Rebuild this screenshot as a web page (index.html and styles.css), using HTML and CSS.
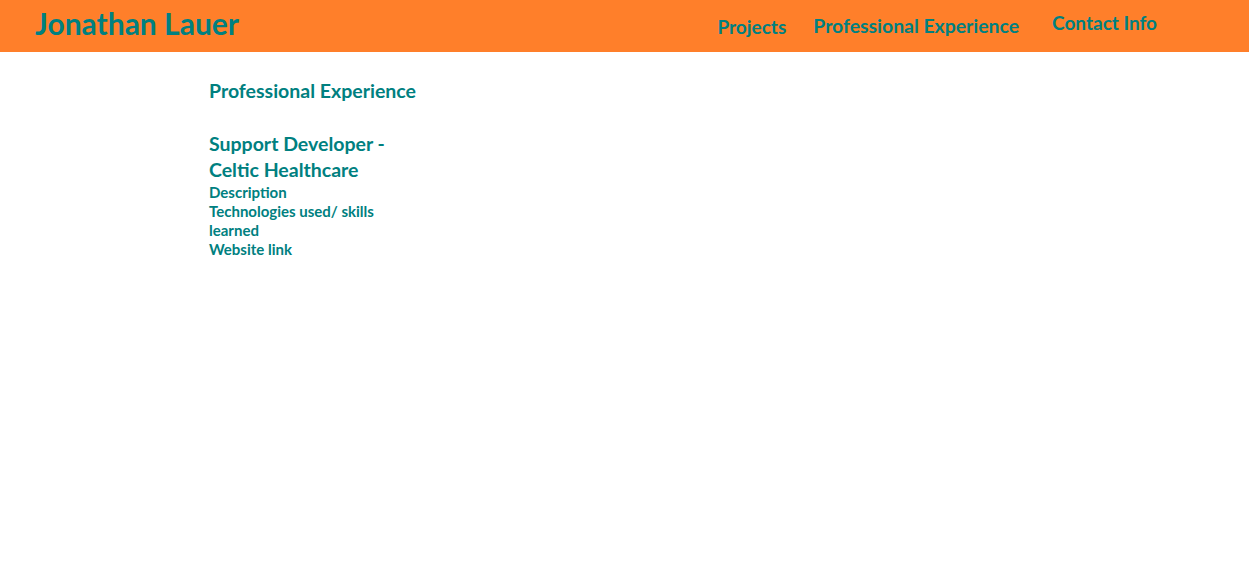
FILE: index.html
```html
<!DOCTYPE html>
<html>
<head>
<meta charset="utf-8">
<link rel="stylesheet" href="styles.css">
</head>
<body>
<header class="topbar">
  <h1 class="brand">Jonathan Lauer</h1>
  <nav class="nav">
    <a class="nav-link nav-low" href="#">Projects</a>
    <a class="nav-link nav-mid" href="#">Professional Experience</a>
    <a class="nav-link nav-high" href="#">Contact Info</a>
  </nav>
</header>
<main class="content">
  <h2 class="section-title">Professional Experience</h2>
  <h3 class="job-title">Support Developer - Celtic Healthcare</h3>
  <p class="detail">Description</p>
  <p class="detail">Technologies used/ skills learned</p>
  <p class="detail">Website link</p>
</main>
</body>
</html>
```
FILE: styles.css
```css
html, body {
  margin: 0;
  padding: 0;
  background: #ffffff;
}
body {
  font-family: Lato, "Open Sans", sans-serif;
  font-weight: 700;
  color: #008080;
}
.topbar {
  height: 52px;
  background: #ff7f2a;
  display: flex;
  align-items: flex-start;
  justify-content: space-between;
  padding: 0 92px 0 35px;
}
.brand {
  margin: 6px 0 0 0;
  font-size: 30px;
  line-height: 34px;
  font-weight: 700;
}
.nav {
  display: flex;
  align-items: flex-start;
}
.nav-link {
  color: #008080;
  text-decoration: none;
  font-size: 19.4px;
  line-height: 24px;
}
.nav-low { margin-top: 15px; margin-right: 27px; font-size: 19px; }
.nav-mid { margin-top: 14px; margin-right: 33px; }
.nav-high { margin-top: 11px; font-size: 19px; }
.content {
  width: 212px;
  margin-left: 209px;
  padding-top: 27px;
}
.section-title {
  margin: 0 0 28px 0;
  font-size: 19.5px;
  line-height: 24px;
}
.job-title {
  margin: 0;
  font-size: 19.5px;
  line-height: 26px;
}
.detail {
  margin: 0;
  font-size: 15px;
  line-height: 19px;
}
```
